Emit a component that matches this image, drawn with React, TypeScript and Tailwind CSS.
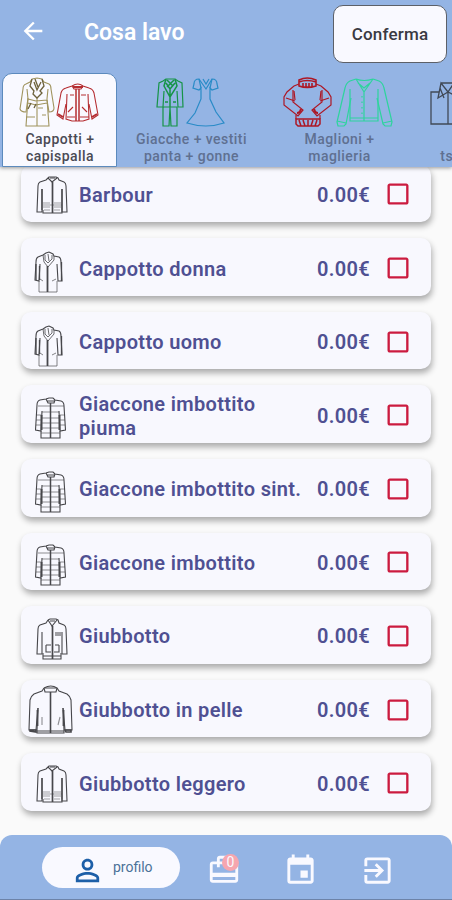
import React from "react"
import {
  MdArrowBack,
  MdCardTravel,
  MdCheckBoxOutlineBlank,
  MdEvent,
  MdExitToApp,
  MdPersonOutline,
} from "react-icons/md"

type RowIcon = "jacket" | "coat" | "puffer" | "pockets" | "leather"

const items: { id: string; name: string; icon: RowIcon }[] = [
  { id: "1", name: "Barbour", icon: "jacket" },
  { id: "2", name: "Cappotto donna", icon: "coat" },
  { id: "3", name: "Cappotto uomo", icon: "coat" },
  { id: "4", name: "Giaccone imbottito piuma", icon: "puffer" },
  { id: "5", name: "Giaccone imbottito sint.", icon: "puffer" },
  { id: "6", name: "Giaccone imbottito", icon: "puffer" },
  { id: "7", name: "Giubbotto", icon: "pockets" },
  { id: "8", name: "Giubbotto in pelle", icon: "leather" },
  { id: "9", name: "Giubbotto leggero", icon: "jacket" },
]

const Jacket = () => (
  <>
    <path d="M27 14L28 13H35L37 14L38 16L43 18Q45 19 45 22L46 48H41V25M27 14L25 16L19 18Q17 19 17 22L16 48H21V25" />
    <path d="M27 14L31 18L36 14M29 14H34M22 46V49H41V46" />
    <path d="M31.5 18V49" strokeWidth="1.7" />
    <path d="M41 25V46M21 25V46" strokeWidth="1.3" />
    <path d="M22 39H29M33 39H40M22 43H29M33 43H40M23 46H29M33 46H39M22 41H41" opacity=".5" />
  </>
)

const Coat = () => (
  <>
    <path d="M22 17L25 15L28 14L32 16L33 18L38 19Q40 20 40 24L41 43H37L36 26M22 17L17 19Q15 20 15 24L14 42L18 43L19 26" />
    <path d="M22 17L23 24L27 29L33 22V18M24 17V22L27 25L31 21V17M27 16L28 23" strokeWidth=".8" />
    <path d="M18 43V54H36V43M19 41L22 43M31 43L35 41" strokeWidth=".9" opacity=".75" />
    <path d="M26.5 28V54" strokeWidth="1.8" />
    <path d="M40.5 24V43M18.5 28V42M15 26V42" strokeWidth="1.3" />
  </>
)

const Puffer = () => (
  <>
    <path d="M25 14L28 13H32L34 15L40 16Q43 17 43 21L44.5 45L39 46L38 26M25 14L19 15Q16 16 16 20L14.5 45L20 46L21 26" />
    <path d="M20 46V53H39V46M26 16H34M25 14L27 18H33L34 15" />
    <path d="M17 21H43M21 27H38M21 33H38M20 38H39M20 43H39M20 48H39M15 30H20M15 35H20M15 40H20M39 30H44M39 35H44M39 40H44" opacity=".6" />
    <path d="M29.5 18V53" strokeWidth="1.5" />
    <path d="M20.5 30V45M38.5 30V45" strokeWidth="2" />
  </>
)

const Pockets = () => (
  <>
    <path d="M27 14L29 13H35L37 14L38 17L43 19Q45 20 45 23L46 48H41V26M27 14L25 17L19 19Q17 20 17 23L16 48H21V26" />
    <path d="M27 14L31 20L36 14M29 15H34M22 47V53H40V47M22 50H40" />
    <path d="M31.5 20V53" strokeWidth="1.7" />
    <path d="M34 27H40M34 29H40M25 39H30M25 39V46H30M34 39H38M38 39V46H33" />
  </>
)

const Leather = () => (
  <>
    <path d="M23 8Q30 4 36 8L38 11L46 14Q49 16 50 20L51 50H44L42 28M23 8L21 11L13 14Q10 16 9 20L8 50H15L17 28" />
    <path d="M23 8L24 12H35L36 8M24 8H35M17 28L16 50V53H43V50L42 28M16 51H43" />
    <path d="M29.5 12V53" strokeWidth="1.6" />
    <path d="M9 50H15V52L9 51ZM44 50H50V52H45Z" strokeWidth="1.6" />
    <path d="M21 37V45M39 37L37 45" opacity=".6" />
    <path d="M16.5 30V46M42.5 30V46" strokeWidth="1.8" />
  </>
)

const rowIcons: Record<RowIcon, React.FC> = {
  jacket: Jacket,
  coat: Coat,
  puffer: Puffer,
  pockets: Pockets,
  leather: Leather,
}

const CoatsIcon = () => (
  <svg viewBox="2 73 114 57" className="h-[57px] w-[114px]" fill="none" strokeWidth="1.1">
    <g stroke="#a0945f">
      <path d="M31 79L36 78L41 79L43 82L48 84Q50 85 50 89L53 108Q53 112 48 112L46 100M31 79L29 82L25 84Q22 85 22 89L19 109Q20 112 25 112L27 98" />
      <path d="M26 89L27 99L25 126H48L46 99L47 89M36 98V126M27 99L35 101L46 100M27 103L35 105L46 103M25 117H34M37 108H42M41 115H45" />
    </g>
    <path stroke="#6c613c" strokeWidth="1.3" d="M31 79L29 86L33 91L32 94L36 98L41 93L39 91L43 86L41 79M33 82L36 90L40 82M34 79L37 87M30 103L27 109M35 104L33 108" />
    <g stroke="#b52e32">
      <path d="M71 86Q77 82 82 86L88 88Q92 89 93 93L97 115L91 119L88 104M71 86L65 88Q61 89 60 93L56 115L62 119L65 104" />
      <path d="M66 94L65 119L71 121H82L88 119L87 94M71 86L73 89H80L82 86M69 95H73M80 95H85M67 112L72 107M86 112L81 107M66 117H74M79 117H88" />
      <path d="M75 89V121M78 89V121" strokeWidth="1.5" />
      <path d="M57 114L62 117M91 117L96 114M72 87H82" strokeWidth="2" />
    </g>
  </svg>
)

const SuitsIcon = () => (
  <svg viewBox="117 73 148 57" className="h-[57px] w-[148px]" fill="none" strokeWidth="1.2">
    <g stroke="#169447">
      <path d="M166 79H175L178 81L182 83L183 107H178L177 91M166 79L163 81L159 83L157 107H163L164 91" />
      <path d="M163 107V126H169L170 107L171 126H177V107H163" />
      <path d="M166 79L164 86L170 97L177 86L175 79M166 83L170 89L175 83M167 80L173 86M174 80L167 87M170 89V107M165 102H168M173 102H176" strokeWidth="1.5" />
    </g>
    {/* short puffed sleeves, v neck, flared skirt */}
    <g stroke="#298bc7">
      <path d="M199 79Q194 79 194 84L193 88L199 90L201 88V99L195 113L187 123Q206 129 224 123L216 112L210 99V88L212 90L218 88L217 84Q217 79 212 79L206 89L199 79Z" />
      <path d="M199 79L201 88M212 79L210 88M203 79L206 84L209 79" />
    </g>
  </svg>
)

const KnitwearIcon = () => (
  <svg viewBox="265 73 148 57" className="h-[57px] w-[148px]" fill="none" strokeWidth="1.2">
    <g stroke="#ad1725">
      <path d="M299 84L294 86L287 92L284 97V105L298 116L303 110L293 102V90M316 84L321 86L328 92L331 97V105L317 116L312 110L322 102V90" />
      <path d="M296 115V119M320 115V119M286 98L295 101M329 98L320 101M294 91L295 100M321 91L320 100" />
      <path d="M297 113Q300 113 301 109M318 113Q315 113 314 109" strokeWidth="2.2" />
      <path d="M299 80Q307 76 316 80V86Q307 89 299 86ZM299 82Q307 79 316 82M303 83V87H312V83M306 83V87M309 83V87" strokeWidth="1.6" />
      <path d="M296 119H320V124L318 126H298L296 124ZM299 120L301 126M303 120L305 126M308 120V126M313 120L311 126M317 120L315 126" strokeWidth="1.5" />
    </g>
    <g stroke="#2dd49d">
      <path d="M356 79L350 81Q346 83 345 88L337 122L338 126L344 126L346 124L351 98M373 79L379 81Q383 83 384 88L392 122L391 126H385L383 124L377 98" />
      <path d="M350 89V121H378V89M356 79L364 92L373 79M356 79Q364 82 373 79M358 83L364 88L370 83M364 92V121M350 118H378M337 121L346 123M383 123L392 121" />
      <path d="M362 96V114" strokeDasharray="1.5 4" />
    </g>
  </svg>
)

const ShirtIcon = () => (
  <svg viewBox="413 73 148 57" className="h-[57px] w-[148px]" fill="none" stroke="#404956" strokeWidth="1.3">
    <path d="M439 92H431V124H466V92H459M441 83H454L460 98L448 92L438 98L441 83L448 92M454 83L448 92V124M440 88L444 98" />
  </svg>
)

const tabs = [
  { id: "1", lines: ["Cappotti +", "capispalla"], icon: <CoatsIcon /> },
  { id: "2", lines: ["Giacche + vestiti", "panta + gonne"], icon: <SuitsIcon /> },
  { id: "3", lines: ["Maglioni +", "maglieria"], icon: <KnitwearIcon /> },
  { id: "4", lines: ["Polo +", "tshirt + intimo"], icon: <ShirtIcon /> },
]

const App = () => {
  return (
    <div className="flex h-[900px] w-full flex-col overflow-hidden bg-[#fafafa] font-['Roboto',sans-serif]">
      <header className="z-10 h-[167px] shrink-0 overflow-hidden bg-[#94b4e4] shadow-[0_1px_4px_rgba(0,0,0,0.4)]">
        <div className="flex h-[73px] items-start pl-[19px] pr-[5px]">
          <button className="mt-[17px]">
            <MdArrowBack className="size-7 text-white" />
          </button>
          <h1 className="ml-[37px] mt-[17px] text-[23px] font-semibold leading-8 text-white">
            Cosa lavo
          </h1>
          <button className="ml-auto mt-[5px] h-[58px] w-[114px] rounded-[10px] border border-[#5c6068] bg-[#f9f9ff] pt-0.5 text-[17px] font-medium tracking-[0.2px] text-[#3a3a42]">
            Conferma
          </button>
        </div>
        <ul className="flex h-[94px] pl-0.5">
          {tabs.map((tab, i) => (
            <li
              key={tab.id}
              className={
                i === 0
                  ? "flex w-[115px] shrink-0 flex-col items-center rounded-t-[10px] border border-[#5c8abd] bg-[#f9f9ff] text-[#4a4a54]"
                  : "flex w-[148px] shrink-0 flex-col items-center pt-px text-[#5f7091]"
              }
            >
              <div className="-mt-px">{tab.icon}</div>
              <p className="mt-px whitespace-nowrap pl-px text-center text-[14px] font-medium leading-[17px] tracking-[0.45px]">
                {tab.lines[0]}
                <br />
                {tab.lines[1]}
              </p>
            </li>
          ))}
        </ul>
      </header>

      <main className="min-h-0 flex-1 overflow-hidden px-[21px]">
        <ul className="-mt-[2.4px] flex flex-col gap-4">
          {items.map((item) => {
            const Icon = rowIcons[item.icon]
            return (
              <li
                key={item.id}
                className="flex h-[57.6px] shrink-0 items-center rounded-[10px] bg-[#f8f8fe] shadow-[1px_4px_6px_rgba(0,0,0,0.32)]"
              >
                <svg
                  viewBox="0 0 58 58"
                  className="size-[58px] shrink-0"
                  fill="none"
                  stroke="#47474b"
                  strokeWidth="1.1"
                >
                  <Icon />
                </svg>
                <p className="w-[232px] pt-[3px] text-[20px] font-semibold leading-6 tracking-[0.34px] text-[#4f5092]">
                  {item.name}
                </p>
                <span className="ml-1.5 pt-[3px] text-[20px] font-semibold tracking-[0.34px] text-[#4f5092]">
                  0.00€
                </span>
                <MdCheckBoxOutlineBlank className="ml-auto mr-[19px] mt-0.5 size-7 text-[#cb1b3f]" />
              </li>
            )
          })}
        </ul>
      </main>

      <nav className="z-10 flex h-[65px] shrink-0 items-start rounded-t-[12px] border-b border-[#6d83a8] bg-[#94b4e4] pl-[42px] pt-3">
        <button className="flex h-[41px] w-[138px] items-center rounded-full bg-[#f9f9ff] pl-7">
          <MdPersonOutline className="mt-1.5 size-[35px] text-[#1d5fa8]" />
          <span className="ml-2 text-[14px] text-[#4b7198]">profilo</span>
        </button>
        <button className="relative ml-[27px] mt-[6px]">
          <MdCardTravel className="size-[34px] text-[#f9f9ff]" />
          <span className="absolute top-px left-[15px] flex size-[17px] items-center justify-center rounded-full bg-[#f6a6af] text-[14px] text-[#f9f9ff]">
            0
          </span>
        </button>
        <button className="ml-[42px] mt-[6px]">
          <MdEvent className="size-[35px] text-[#f9f9ff]" />
        </button>
        <button className="ml-[42px] mt-[6px]">
          <MdExitToApp className="size-[35px] text-[#f9f9ff]" />
        </button>
      </nav>
    </div>
  )
}

export default App
